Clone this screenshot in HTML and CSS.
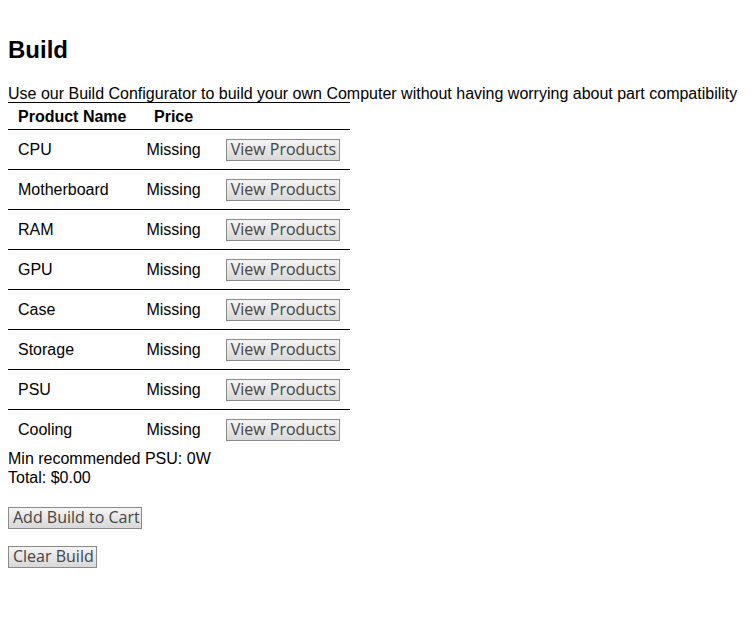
FILE: index.html
```html
<!DOCTYPE html>
<html>
<head>
<meta charset="utf-8">
<link rel="stylesheet" href="styles.css">
</head>
<body>
<h1 class="title">Build</h1>
<div class="intro">Use our Build Configurator to build your own Computer without having worrying about part compatibility</div>
<table class="build">
  <thead>
    <tr><th class="c1">Product Name</th><th class="c2">Price</th><th class="c3"></th></tr>
  </thead>
  <tbody>
    <tr><td>CPU</td><td>Missing</td><td><button class="btn view">View Products</button></td></tr>
    <tr><td>Motherboard</td><td>Missing</td><td><button class="btn view">View Products</button></td></tr>
    <tr><td>RAM</td><td>Missing</td><td><button class="btn view">View Products</button></td></tr>
    <tr><td>GPU</td><td>Missing</td><td><button class="btn view">View Products</button></td></tr>
    <tr><td>Case</td><td>Missing</td><td><button class="btn view">View Products</button></td></tr>
    <tr><td>Storage</td><td>Missing</td><td><button class="btn view">View Products</button></td></tr>
    <tr><td>PSU</td><td>Missing</td><td><button class="btn view">View Products</button></td></tr>
    <tr><td>Cooling</td><td>Missing</td><td><button class="btn view">View Products</button></td></tr>
  </tbody>
</table>
<div class="summary">
  <div class="info">Min recommended PSU: 0W</div>
  <div class="info">Total: $0.00</div>
</div>
<div class="actions">
  <button class="btn add">Add Build to Cart</button>
  <button class="btn clear">Clear Build</button>
</div>
</body>
</html>
```
FILE: styles.css
```css
body {
  margin: 8px;
  font-family: "Liberation Sans", Arial, sans-serif;
  font-size: 16px;
  color: #000;
  background: #fff;
}
.title {
  font-size: 24px;
  font-weight: bold;
  margin: 28px 0 21px;
  line-height: 28px;
}
.intro {
  line-height: 18px;
  height: 17px;
  white-space: nowrap;
}
.build {
  border-collapse: collapse;
  width: 341px;
  border-top: 1px solid #000;
}
.build th {
  font-weight: bold;
  text-align: center;
  height: 25px;
  padding: 1px 10px 0;
  border-bottom: 1px solid #000;
  white-space: nowrap;
}
.build .c1 { width: 109px; }
.build .c2 { width: 53px; }
.build td {
  height: 39px;
  padding: 0 10px;
  vertical-align: middle;
  white-space: nowrap;
}
.build tbody tr + tr td {
  border-top: 1px solid #000;
}
.btn {
  font-family: "Open Sans", "DejaVu Sans", sans-serif;
  font-size: 16px;
  color: #444;
  background: linear-gradient(#f4f4f4, #d8d8d8);
  border: 1px solid #8a8a8a;
  border-radius: 0;
  height: 22px;
  padding: 0 4px 1px;
  line-height: 19px;
  display: block;
  box-sizing: border-box;
  white-space: nowrap;
  text-align: center;
}
.view {
  width: 114px;
  margin-left: 5px;
}
.info {
  line-height: 19px;
}
.actions {
  display: flex;
  flex-direction: column;
  align-items: flex-start;
  gap: 17px;
  margin-top: 20px;
}
.add { width: 134px; }
.clear { width: 89px; }
```
